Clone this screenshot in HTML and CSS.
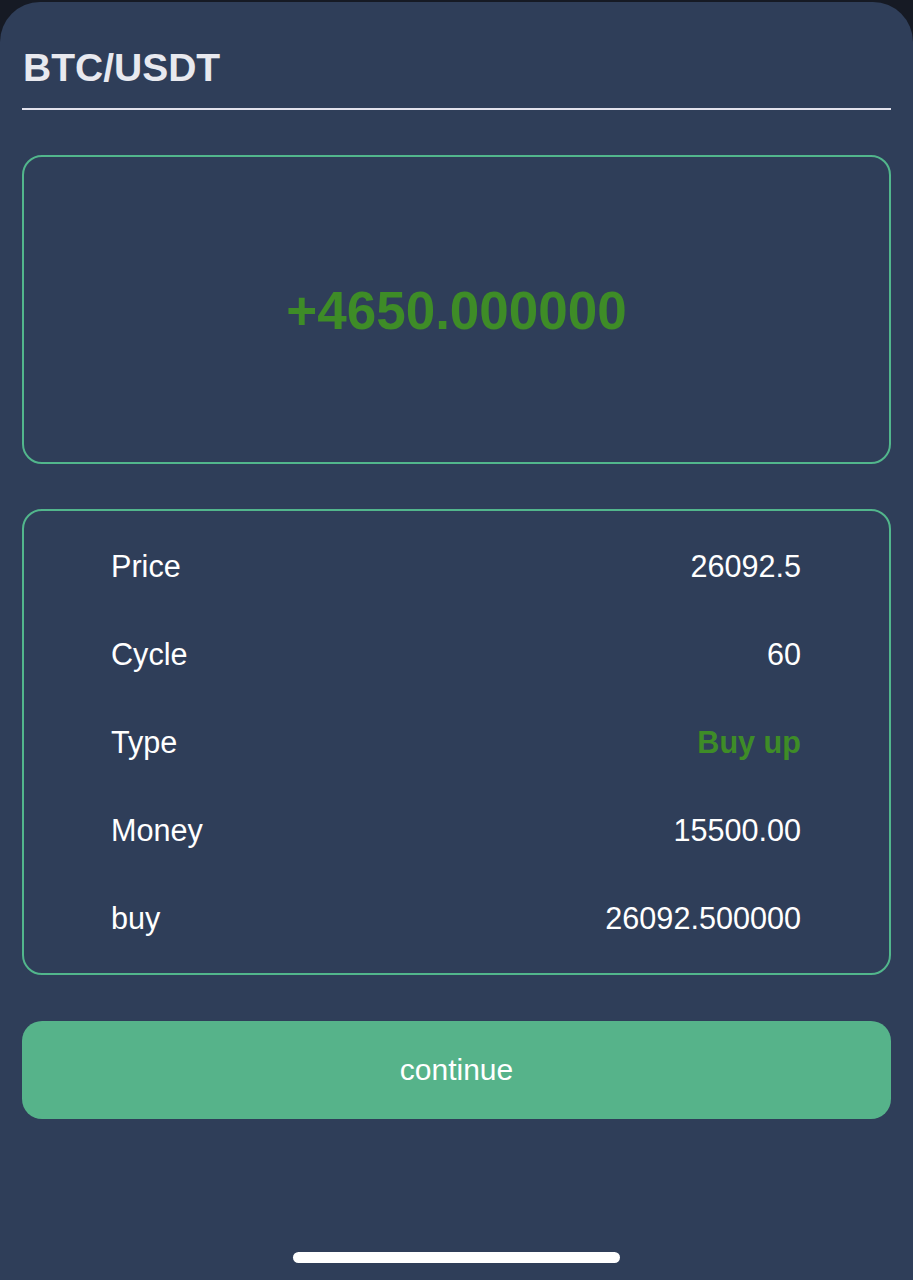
FILE: index.html
```html
<!DOCTYPE html>
<html lang="en">
<head>
<meta charset="utf-8">
<title>BTC/USDT</title>
<link rel="stylesheet" href="styles.css">
</head>
<body>
<div class="sheet">
  <h1 class="title">BTC/USDT</h1>
  <div class="result-card">
    <span class="profit">+4650.000000</span>
  </div>
  <div class="detail-card">
    <div class="row"><span>Price</span><span>26092.5</span></div>
    <div class="row"><span>Cycle</span><span>60</span></div>
    <div class="row"><span>Type</span><span class="up">Buy up</span></div>
    <div class="row"><span>Money</span><span>15500.00</span></div>
    <div class="row"><span>buy</span><span>26092.500000</span></div>
  </div>
  <button class="continue">continue</button>
  <div class="home-bar"></div>
</div>
</body>
</html>
```
FILE: styles.css
```css
html, body {
  margin: 0;
  padding: 0;
  background: #161a24;
  font-family: "Liberation Sans", Arial, sans-serif;
}
.sheet {
  margin-top: 2px;
  height: 1278px;
  box-sizing: border-box;
  background: #2f3e59;
  border-radius: 40px 40px 0 0;
  padding: 0 22px 0 22px;
  display: flex;
  flex-direction: column;
}
.title {
  margin: 0;
  padding: 44px 0 0 1px;
  height: 62px;
  box-sizing: content-box;
  font-size: 39px;
  font-weight: bold;
  color: #e8e9ef;
  line-height: 44px;
  border-bottom: 2px solid #e2e2ec;
}
.result-card {
  margin-top: 45px;
  height: 309px;
  box-sizing: border-box;
  border: 2px solid #52b68c;
  border-radius: 20px;
  display: flex;
  align-items: center;
  justify-content: center;
}
.profit {
  font-size: 53px;
  font-weight: bold;
  color: #3e8c27;
  position: relative;
  top: 1px;
}
.detail-card {
  margin-top: 45px;
  height: 466px;
  box-sizing: border-box;
  border: 2px solid #52b68c;
  border-radius: 20px;
  padding: 11px 88px 11px 87px;
  display: flex;
  flex-direction: column;
}
.row {
  height: 88px;
  display: flex;
  justify-content: space-between;
  align-items: center;
  font-size: 30.6px;
  color: #ffffff;
}
.row .up {
  color: #3e8c27;
  font-weight: bold;
}
.continue {
  margin-top: 46px;
  height: 98px;
  border: none;
  border-radius: 20px;
  background: #56b38a;
  color: #ffffff;
  font-family: "Liberation Sans", Arial, sans-serif;
  font-size: 30px;
  padding: 0;
}
.home-bar {
  margin: 133px auto 0;
  width: 327px;
  height: 11px;
  border-radius: 6px;
  background: #ffffff;
}
```
